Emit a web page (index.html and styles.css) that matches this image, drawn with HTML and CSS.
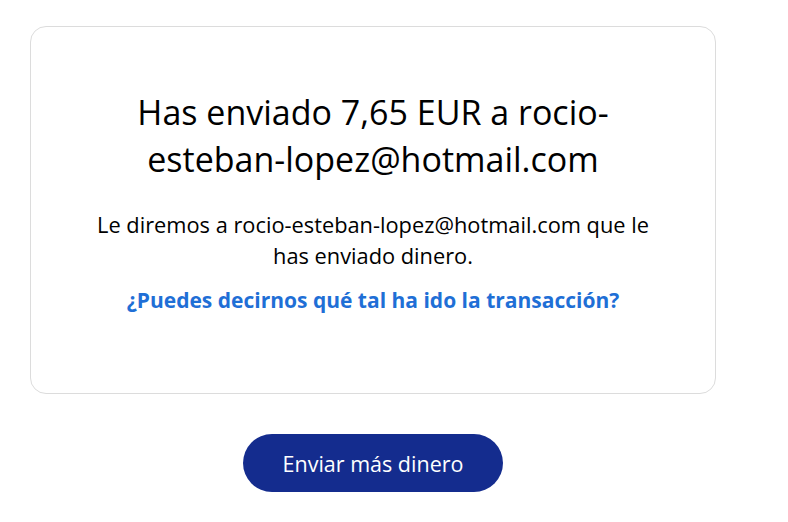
FILE: index.html
```html
<!DOCTYPE html>
<html lang="es">
<head>
    <meta charset="UTF-8">
    <meta name="viewport" content="width=device-width, initial-scale=1.0">
    <title>Enviado</title>
    <link rel="stylesheet" href="styles.css">
</head>
<body>
    <div class="page">
        <div class="card">
            <h1>Has enviado 7,65 EUR a rocio-<br>esteban-lopez@hotmail.com</h1>
            <p class="note">Le diremos a rocio-esteban-lopez@hotmail.com que le<br>has enviado dinero.</p>
            <a href="#" class="feedback">¿Puedes decirnos qué tal ha ido la transacción?</a>
        </div>
        <div class="actions">
            <button type="button" class="btn">Enviar más dinero</button>
        </div>
    </div>
</body>
</html>
```

FILE: styles.css
```css
body {
    margin: 0;
    font-family: "Open Sans", Lato, sans-serif;
    background-color: #fff;
    color: #000;
}
.page {
    width: 686px;
    padding: 26px 0 0 30px;
}
.card {
    border: 1px solid #dcdcdc;
    border-radius: 16px;
    padding: 62px 20px 78px;
    text-align: center;
}
h1 {
    margin: 0 0 26px;
    font-size: 34px;
    font-weight: 400;
    line-height: 47px;
    color: #000;
}
.note {
    margin: 0 0 14px;
    font-size: 21.8px;
    line-height: 31px;
}
.feedback {
    display: inline-block;
    font-size: 21px;
    line-height: 30px;
    font-weight: 700;
    color: #1f6fd6;
    text-decoration: none;
}
.actions {
    display: flex;
    justify-content: center;
    margin-top: 40px;
}
.btn {
    width: 260px;
    height: 58px;
    border: none;
    border-radius: 29px;
    background-color: #142c8e;
    color: #fff;
    font-family: inherit;
    font-size: 21.5px;
    cursor: pointer;
}
```
